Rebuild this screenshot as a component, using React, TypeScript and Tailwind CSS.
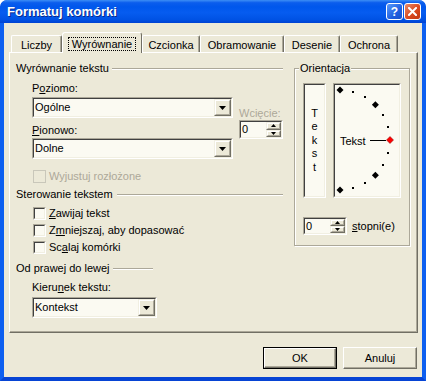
import React from "react";

type BoxProps = { className?: string; inner?: string; children?: React.ReactNode };

// classic 3D sunken frame (inputs, checkboxes, preview boxes)
const Sunken = ({ className = "", inner = "bg-[#fbfaf2]", children }: BoxProps) => (
  <div className={`border border-t-[#aca899] border-l-[#aca899] border-b-white border-r-white ${className}`}>
    <div className={`h-full w-full border border-t-[#404040] border-l-[#404040] border-b-[#f1efe2] border-r-[#f1efe2] ${inner}`}>
      {children}
    </div>
  </div>
);

// classic 3D raised frame (small buttons)
const Raised = ({ className = "", children }: BoxProps) => (
  <div className={`border border-t-[#f1efe2] border-l-[#f1efe2] border-b-[#716f64] border-r-[#716f64] bg-[#ece9d8] ${className}`}>
    <div className="flex h-full w-full items-center justify-center border border-t-white border-l-white border-b-[#aca899] border-r-[#aca899]">
      {children}
    </div>
  </div>
);

const ArrowDown = ({ w = 7, h = 4 }: { w?: number; h?: number }) => (
  <svg width={w} height={h} viewBox={`0 0 ${w} ${h}`}>
    <polygon points={`0,0 ${w},0 ${w / 2},${h}`} fill="#000" />
  </svg>
);

const ArrowUp = ({ w = 5, h = 3 }: { w?: number; h?: number }) => (
  <svg width={w} height={h} viewBox={`0 0 ${w} ${h}`}>
    <polygon points={`0,${h} ${w},${h} ${w / 2},0`} fill="#000" />
  </svg>
);

const Select = ({ value, className = "" }: { value: string; className?: string }) => (
  <Sunken className={`h-[21px] ${className}`}>
    <div className="flex h-full items-center">
      <span className="flex-1 pl-[1px]">{value}</span>
      <Raised className="h-[17px] w-[17px]">
        <ArrowDown />
      </Raised>
    </div>
  </Sunken>
);

const Spin = ({ className = "" }: { className?: string }) => (
  <Sunken className={`w-[44px] ${className}`}>
    <div className="flex h-full items-center">
      <span className="flex-1 pl-[1px]">0</span>
      <div className="flex h-full flex-col">
        <Raised className="h-1/2 w-[15px]">
          <ArrowUp />
        </Raised>
        <Raised className="h-1/2 w-[15px]">
          <ArrowDown w={5} h={3} />
        </Raised>
      </div>
    </div>
  </Sunken>
);

const Check = ({ label, disabled = false }: { label: React.ReactNode; disabled?: boolean }) => (
  <div className="flex h-[13px] items-center pl-[17px]">
    {disabled ? (
      <div className="h-[13px] w-[13px] border border-[#c9c7ba] bg-[#ece9d8]" />
    ) : (
      <Sunken className="h-[13px] w-[13px]" />
    )}
    <span className={`ml-[3px] ${disabled ? "text-[#aca899]" : ""}`}>{label}</span>
  </div>
);

const Heading = ({ text, line = "flex-1", gap = "ml-[4px]" }: { text: string; line?: string; gap?: string }) => (
  <div className="flex h-[13px] items-center">
    <span>{text}</span>
    <div className={`${gap} ${line} h-[2px] border-t border-b border-t-[#aca899] border-b-white`} />
  </div>
);

const Tab = ({ label, w, active = false }: { label: string; w: string; active?: boolean }) =>
  active ? (
    <div
      className={`relative z-10 -mb-[1px] flex h-[21px] ${w} items-start justify-center rounded-t-[3px] border-t border-l border-r border-t-white border-l-white border-r-[#716f64] bg-[#ece9d8] pt-[4px]`}
    >
      <span className="border border-dotted border-black px-[3px] leading-[12px]">{label}</span>
    </div>
  ) : (
    <div
      className={`flex h-[17px] ${w} items-center justify-center rounded-t-[2px] border-t border-l border-r border-t-white border-l-white border-r-[#716f64] bg-[#ece9d8] pt-[2px] shadow-[inset_-1px_0_0_#aca899]`}
    >
      {label}
    </div>
  );

const ARC = Array.from({ length: 13 }, (_, i) => 90 - i * 15);

const Orientation = () => (
  <div className="relative ml-[10px] mt-[6px] h-[178px] w-[116px] border border-[#aca899] pl-[8px] pt-[14px] shadow-[inset_1px_1px_0_white,1px_1px_0_white]">
    <span className="absolute left-[4px] top-[-7px] bg-[#ece9d8] px-[1px]">Orientacja</span>
    <div className="flex gap-[7px]">
      <Sunken className="h-[115px] w-[23px]">
        <div className="flex h-full flex-col items-center justify-center leading-[13.5px]">
          {"Tekst".split("").map((c, i) => (
            <span key={i}>{c}</span>
          ))}
        </div>
      </Sunken>
      <Sunken className="h-[115px] w-[68px]">
        <div className="relative h-full w-full">
          <svg width="64" height="111" viewBox="0 0 64 111" className="block">
            {ARC.map((a) => {
              const r = (a * Math.PI) / 180;
              const x = 5 + 50 * Math.cos(r);
              const y = 55 - 50 * Math.sin(r);
              if (a % 45 === 0) {
                return (
                  <polygon
                    key={a}
                    points={`${x},${y - 3.5} ${x + 3.5},${y} ${x},${y + 3.5} ${x - 3.5},${y}`}
                    fill={a === 0 ? "#ff0000" : "#000"}
                    stroke={a === 0 ? "#800000" : "none"}
                    strokeWidth="0.5"
                  />
                );
              }
              return <rect key={a} x={Math.round(x) - 1} y={Math.round(y) - 1} width="2" height="2" fill="#000" />;
            })}
            <line x1="35" y1="55.5" x2="51" y2="55.5" stroke="#000" strokeWidth="1" />
          </svg>
          <span className="absolute left-[5px] top-[50px]">Tekst</span>
        </div>
      </Sunken>
    </div>
    <div className="mt-[19px] flex items-center">
      <Spin className="h-[18px]" />
      <span className="ml-[5px]">
        <u className="underline-offset-[1px]">s</u>topni(e)
      </span>
    </div>
  </div>
);

const DlgButton = ({ label, isDefault = false }: { label: string; isDefault?: boolean }) => (
  <div className={`h-[22px] w-[74px] ${isDefault ? "border border-black" : ""}`}>
    <div className="flex h-full w-full items-center justify-center border border-t-white border-l-white border-b-[#716f64] border-r-[#716f64] bg-[#ece9d8] shadow-[inset_-1px_-1px_0_#aca899]">
      {label}
    </div>
  </div>
);

const TitleBar = () => (
  <div className="flex h-[23px] shrink-0 items-center rounded-t-[7px] bg-[linear-gradient(to_bottom,#3d8ef5_0%,#0b5ded_12%,#0057ec_30%,#065cf0_55%,#0052e4_85%,#0042d2_100%)] pl-[7px] pr-[5px]">
    <span className="flex-1 text-[13px] font-bold leading-[15px] text-white [text-shadow:1px_1px_0_#0a2a8a]">
      Formatuj komórki
    </span>
    <div className="flex gap-[1px]">
      <div className="flex h-[17px] w-[17px] items-center justify-center rounded-[3px] border border-white bg-[linear-gradient(to_bottom_right,#5a9bfb,#1f5fe0_60%,#1a4fc8)] text-[12px] font-bold leading-none text-white">
        ?
      </div>
      <div className="flex h-[17px] w-[17px] items-center justify-center rounded-[3px] border border-white bg-[linear-gradient(to_bottom_right,#e88c6a,#d9491f_55%,#c23812)]">
        <svg width="9" height="9" viewBox="0 0 9 9">
          <path d="M1 1 L8 8 M8 1 L1 8" stroke="#fff" strokeWidth="2" strokeLinecap="square" />
        </svg>
      </div>
    </div>
  </div>
);

export default function App() {
  return (
    <div className="flex h-[381px] w-[426px] flex-col overflow-hidden rounded-t-[7px] bg-[#0b5ae8] font-['Liberation_Sans',Arial,sans-serif] text-[11px] leading-[13px] text-black">
      <TitleBar />
      <div className="flex flex-1 flex-col border-x-[4px] border-b-[4px] border-x-[#0d5ff0] border-b-[#0744d4] bg-[#ece9d8]">
        {/* tabs */}
        <div className="mt-[9px] flex h-[20px] items-end pl-[7px]">
          <Tab label="Liczby" w="w-[51px]" />
          <Tab label="Wyrównanie" w="w-[80px]" active />
          <Tab label="Czcionka" w="w-[58px]" />
          <Tab label="Obramowanie" w="w-[84px]" />
          <Tab label="Desenie" w="w-[56px]" />
          <Tab label="Ochrona" w="w-[58px]" />
        </div>

        {/* tab page */}
        <div className="ml-[5px] mr-[4px] flex h-[281px] border border-t-white border-l-white border-b-[#716f64] border-r-[#716f64] pl-[6px] pt-[9px] shadow-[inset_-1px_-1px_0_#aca899]">
          <div className="flex w-[268px] flex-col pr-[1px]">
            <Heading text="Wyrównanie tekstu" gap="ml-[3px]" />
            <div className="mt-[7px] flex pl-[16px]">
              <div className="flex w-[202px] flex-col">
                <span>
                  P<u className="underline-offset-[1px]">o</u>ziomo:
                </span>
                <Select value="Ogólne" className="mt-[2px]" />
                <span className="mt-[6px]">
                  <u className="underline-offset-[1px]">P</u>ionowo:
                </span>
                <Select value="Dolne" className="mt-[1px]" />
              </div>
              <div className="ml-[6px] flex flex-col pt-[25px]">
                <span className="text-[#aca899]">Wcięcie:</span>
                <Spin className="h-[19px]" />
              </div>
            </div>
            <div className="mt-[11px]">
              <Check label="Wyjustuj rozłożone" disabled />
            </div>
            <div className="mt-[5px]">
              <Heading text="Sterowanie tekstem" />
            </div>
            <div className="mt-[6px] flex flex-col gap-[4px]">
              <Check
                label={
                  <>
                    <u className="underline-offset-[1px]">Z</u>awijaj tekst
                  </>
                }
              />
              <Check
                label={
                  <>
                    Z<u className="underline-offset-[1px]">m</u>niejszaj, aby dopasować
                  </>
                }
              />
              <Check
                label={
                  <>
                    Sc<u className="underline-offset-[1px]">a</u>laj komórki
                  </>
                }
              />
            </div>
            <div className="mt-[8px]">
              <Heading text="Od prawej do lewej" line="w-[40px]" gap="ml-[3px]" />
            </div>
            <span className="mt-[6px] pl-[16px]">
              Kieru<u className="underline-offset-[1px]">n</u>ek tekstu:
            </span>
            <Select value="Kontekst" className="ml-[16px] mt-[3px] w-[125px]" />
          </div>
          <Orientation />
        </div>

        {/* buttons */}
        <div className="mr-[5px] mt-[14px] flex justify-end gap-[6px]">
          <DlgButton label="OK" isDefault />
          <DlgButton label="Anuluj" />
        </div>
      </div>
    </div>
  );
}
